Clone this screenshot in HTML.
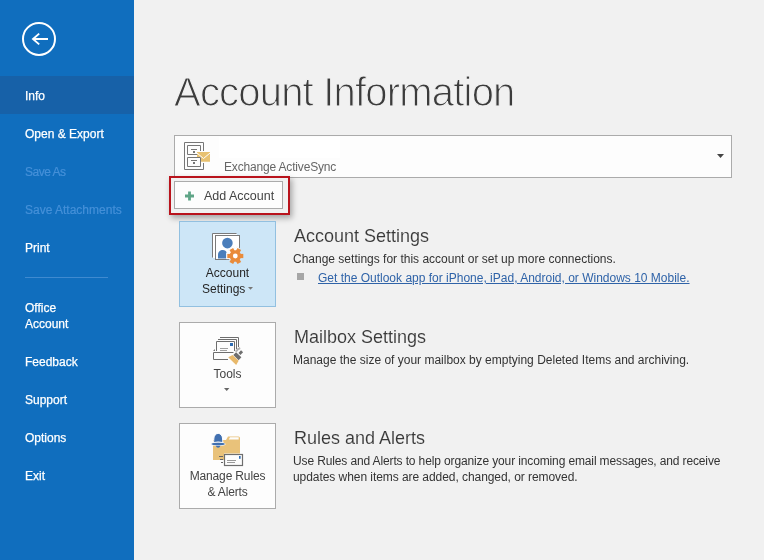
<!DOCTYPE html>
<html><head><meta charset="utf-8">
<style>
*{margin:0;padding:0;box-sizing:border-box}
html,body{width:764px;height:560px;overflow:hidden;background:#f1f1f1;font-family:"Liberation Sans",sans-serif}
.a{position:absolute;white-space:nowrap;will-change:transform}
.si{will-change:transform}
#side{position:absolute;left:0;top:0;width:134px;height:560px;background:#106ebe}
#sel{position:absolute;left:0;top:76px;width:134px;height:38px;background:#1761a8}
.si{position:absolute;left:25px;font-size:12px;line-height:16px;color:#fff;-webkit-text-stroke:0.25px #fff}
.dis{color:#4590d8;-webkit-text-stroke:0.2px #4590d8}
#sep{position:absolute;left:25px;top:277px;width:83px;height:1px;background:#3f8ad0}
#title{left:174px;top:67px;font-size:40px;line-height:50px;color:#3c3c3c;letter-spacing:-0.8px;-webkit-text-stroke:1.1px #f1f1f1}
#dd{position:absolute;left:174px;top:135px;width:558px;height:43px;border:1px solid #ababab;background:#fdfdfd}
#wb{position:absolute;left:219px;top:137px;width:121px;height:21px;background:#fff}
#red{position:absolute;left:169px;top:176px;width:121px;height:39px;border:2px solid #b9131c;box-shadow:2px 3px 6px rgba(0,0,0,.33)}
#btn{position:absolute;left:174px;top:181px;width:109px;height:28px;border:1px solid #ababab;background:#fdfdfd}
.tile{position:absolute;left:179px;width:97px;height:86px;border:1px solid #ababab;background:#fdfdfd}
.tlx{position:absolute;left:0;width:95px;text-align:center;font-size:12px;line-height:16px;color:#444}
.h{left:294px;font-size:18px;line-height:22px;color:#383838;-webkit-text-stroke:0.1px #f1f1f1}
.d{left:293px;font-size:12px;line-height:16px;color:#333}
</style></head><body>
<div id="side">
  <svg class="a" style="left:0;top:0" width="134" height="70">
    <circle cx="39" cy="38.9" r="16" fill="none" stroke="#fff" stroke-width="2"/>
    <path d="M33 39 H48 M39.2 33.6 L33 39 L39.2 44.4" fill="none" stroke="#fff" stroke-width="1.9"/>
  </svg>
  <div id="sel"></div>
  <div class="si" style="top:88px">Info</div>
  <div class="si" style="top:126px">Open &amp; Export</div>
  <div class="si dis" style="top:164px;letter-spacing:-0.5px">Save As</div>
  <div class="si dis" style="top:202px">Save Attachments</div>
  <div class="si" style="top:240px">Print</div>
  <div id="sep"></div>
  <div class="si" style="top:300px">Office<br>Account</div>
  <div class="si" style="top:354px">Feedback</div>
  <div class="si" style="top:392px">Support</div>
  <div class="si" style="top:430px">Options</div>
  <div class="si" style="top:468px">Exit</div>
</div>

<div class="a" id="title">Account Information</div>

<div id="dd"></div><div id="wb"></div>
<div class="a" style="left:224px;top:159px;font-size:12px;line-height:16px;color:#666;letter-spacing:-0.17px">Exchange ActiveSync</div>
<svg class="a" style="left:716px;top:153px" width="10" height="6"><path d="M1 1H8L4.5 5Z" fill="#444"/></svg>

<div id="red"></div>
<div id="btn"></div>
<div class="a" style="left:204px;top:188px;font-size:12.5px;line-height:16px;color:#444">Add Account</div>

<div class="tile" style="top:221px;background:#cde6f7;border-color:#92c0e0"></div>
<div class="tile" style="top:322px"></div>
<div class="tile" style="top:423px"></div>


<div class="a" style="left:179px;top:265px;width:97px;text-align:center;font-size:12px;line-height:16px;color:#262626">Account</div>
<div class="a" style="left:202px;top:281px;font-size:12px;line-height:16px;color:#262626">Settings</div>
<svg class="a" style="left:247px;top:286px" width="8" height="6"><path d="M1 1H6L3.5 3.8Z" fill="#777"/></svg>
<div class="a" style="left:179px;top:366px;width:97px;text-align:center;font-size:12px;line-height:16px;color:#444">Tools</div>
<svg class="a" style="left:223px;top:387px" width="8" height="6"><path d="M1 1H6.4L3.7 4Z" fill="#666"/></svg>
<div class="a" style="left:179px;top:468px;width:97px;text-align:center;font-size:12px;line-height:16px;color:#444;letter-spacing:-0.15px">Manage Rules<br>&amp; Alerts</div>
<svg class="a" style="left:184px;top:190px" width="12" height="12"><path d="M5.5 1.5V10.5M1 6H10" stroke="#5fa587" stroke-width="2.8"/></svg>
<div class="a h" style="top:225px">Account Settings</div>
<div class="a d" style="top:251px">Change settings for this account or set up more connections.</div>
<div class="a" style="left:297px;top:273px;width:7px;height:7px;background:#a6a6a6"></div>
<div class="a d" style="left:318px;top:270px;color:#2f63a8;text-decoration:underline">Get the Outlook app for iPhone, iPad, Android, or Windows 10 Mobile.</div>

<div class="a h" style="top:326px">Mailbox Settings</div>
<div class="a d" style="top:352px">Manage the size of your mailbox by emptying Deleted Items and archiving.</div>

<div class="a h" style="top:427px">Rules and Alerts</div>
<div class="a d" style="top:453px;letter-spacing:-0.13px">Use Rules and Alerts to help organize your incoming email messages, and receive</div>
<div class="a d" style="top:469px;letter-spacing:-0.06px">updates when items are added, changed, or removed.</div>


<!-- exchange icon -->
<svg class="a" style="left:0;top:0" width="764" height="560" viewBox="0 0 764 560">
  <g fill="none" stroke="#767676" stroke-width="1">
    <path d="M203.5 151V142.5H184.5V169.5H203.5V163"/>
    <path d="M200.5 151V145.5H187.5V154.5H197"/>
    <path d="M187.5 157.5H200.5V166.5H187.5Z"/>
    <path d="M191 149.5H197M191 160.5H197"/>
  </g>
  <rect x="193" y="151" width="2" height="2" fill="#767676"/>
  <rect x="193" y="162" width="2" height="2" fill="#767676"/>
  <path d="M197 152H210V161.8H201V157H197Z" fill="#e8c170"/>
  <path d="M197 153L203.5 158.5L210 153" fill="none" stroke="#fdfdfd" stroke-width="1"/>

  <!-- account settings icon -->
  <rect x="213" y="234" width="24" height="24" fill="#fff"/><path d="M212.5 257.5V233.5H236.5" fill="none" stroke="#7a7a7a"/>
  <rect x="215.5" y="235.5" width="24" height="24" fill="#fff" stroke="#7a7a7a"/>
  <circle cx="227.4" cy="243.1" r="5.3" fill="#4a7ebb"/>
  <path d="M218 258.5V255C218 251.8 220.2 250 222.8 250C225 250 226.2 251.2 226.6 252.5V258.5Z" fill="#4a7ebb"/>
  <clipPath id="fr"><rect x="216" y="236" width="23" height="23"/></clipPath>
  <g transform="translate(235.3 256)">
    <g fill="#cde6f7">
      <circle r="6.9"/>
      <rect x="-3.2" y="-9" width="6.4" height="18" transform="rotate(30)"/>
      <rect x="-3.2" y="-9" width="6.4" height="18" transform="rotate(90)"/>
      <rect x="-3.2" y="-9" width="6.4" height="18" transform="rotate(150)"/>
    </g>
  </g>
  <g clip-path="url(#fr)"><g transform="translate(235.3 256)">
    <g fill="#fff">
      <circle r="6.9"/>
      <rect x="-3.2" y="-9" width="6.4" height="18" transform="rotate(30)"/>
      <rect x="-3.2" y="-9" width="6.4" height="18" transform="rotate(90)"/>
      <rect x="-3.2" y="-9" width="6.4" height="18" transform="rotate(150)"/>
    </g>
  </g></g>
  <g transform="translate(235.3 256)">
    <g fill="#e98b3a">
      <circle r="5.8"/>
      <rect x="-2.1" y="-8" width="4.2" height="16" transform="rotate(30)"/>
      <rect x="-2.1" y="-8" width="4.2" height="16" transform="rotate(90)"/>
      <rect x="-2.1" y="-8" width="4.2" height="16" transform="rotate(150)"/>
    </g>
    <circle r="2.4" fill="#fff"/>
  </g>

  <!-- tools icon -->
  <g fill="none" stroke="#6e6e6e" stroke-width="1">
    <path d="M220 337.5H238.5V347"/>
    <path d="M218 339.5H236.5V349"/>
    <path d="M216.5 351V341.5H234.5V351"/>
    <path d="M228 359.5H213.5V352.5H233.5"/>
  </g>
  <rect x="230" y="343" width="3" height="3" fill="#2e6db4"/>
  <path d="M220 348.5H228M220 350.5H227" stroke="#a0a0a0" stroke-width="1"/>
  <path d="M213 351L215 349V351Z" fill="#777"/>
  <path d="M235.8 351.8C236.8 350 238.3 348.6 240.2 348" fill="none" stroke="#b4b4b4" stroke-width="2"/>
  <g transform="translate(237.2 356.3) rotate(44)">
    <rect x="-1.4" y="-7" width="2.8" height="3.8" fill="#6e6e6e"/>
    <rect x="-3.7" y="-2.2" width="7.4" height="4" fill="#6e6e6e"/>
    <path d="M-4.2 2.3H4.2L5.2 6.9H-5.8Z" fill="#e8b96b"/>
  </g>

  <!-- rules icon -->
  <path d="M213 440H226L228 436.5H238.5Q240 436.5 240 438V460H213Z" fill="#e9c27a"/>
  <path d="M228.8 439.6L230 437.3H238.7V439.6Z" fill="#fdfdfd"/>
  <path d="M212.8 444.2C213.5 443 213.8 441.5 213.8 439C213.8 435.8 215.8 433.4 218.2 433.4C220.6 433.4 222.6 435.8 222.6 439C222.6 441.5 222.9 443 223.6 444.2Z" fill="#4170b0" stroke="#fdfdfd" stroke-width="1"/>
  <ellipse cx="218.2" cy="444.2" rx="7.4" ry="1.9" fill="#fdfdfd"/>
  <ellipse cx="218.2" cy="444" rx="6.8" ry="1.3" fill="#4170b0"/>
  <path d="M213.5 442.6Q218.2 441.2 222.9 442.6" fill="none" stroke="#fdfdfd" stroke-width="0.9"/>
  <path d="M215.8 445.8H220.4Q219.8 447.8 218.1 447.8Q216.4 447.8 215.8 445.8Z" fill="#4170b0"/>
  <rect x="224" y="453.5" width="21" height="13" fill="#fdfdfd"/>
  <rect x="224.5" y="454.5" width="18" height="11" fill="#fdfdfd" stroke="#6e6e6e" stroke-width="1.2"/>
  <rect x="239" y="456" width="1.6" height="2.8" fill="#2e6db4"/>
  <path d="M227 460.5H236M227 462.5H235" stroke="#9a9a9a" stroke-width="1"/>
  <path d="M219 456.5H223M220 459.5H223M221 462.5H223" stroke="#666" stroke-width="1.2"/>
</svg>
</body></html>
